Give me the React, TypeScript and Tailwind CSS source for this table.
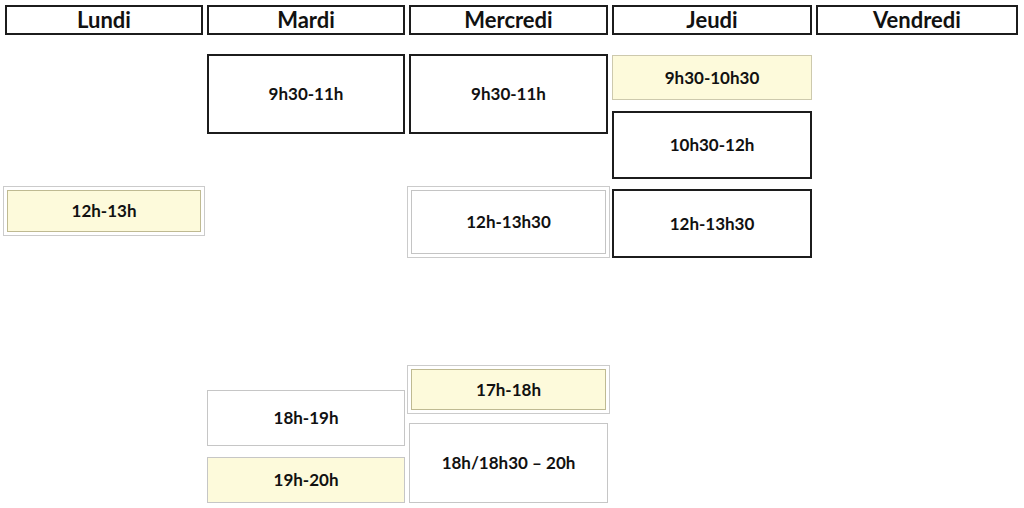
const days = ["Lundi", "Mardi", "Mercredi", "Jeudi", "Vendredi"];

const Plain = ({ label, className }: { label: string; className: string }) => (
  <div
    className={`flex items-center justify-center text-[17px] font-bold text-[#111] ${className}`}
  >
    {label}
  </div>
);

// outer frame with an inner box, like the copied/pasted cells
const Framed = ({
  label,
  className,
  inner,
}: {
  label: string;
  className: string;
  inner: string;
}) => (
  <div
    className={`-mx-[2px] p-[3px] border border-[#cbcbcb] bg-white ${className}`}
  >
    <div
      className={`h-full flex items-center justify-center text-[17px] font-bold text-[#111] border ${inner}`}
    >
      {label}
    </div>
  </div>
);

export default function App() {
  return (
    <div
      className="w-[1024px] h-[508px] bg-white overflow-hidden pt-[5px] pl-[5px]"
      style={{ fontFamily: "Lato, 'Open Sans', sans-serif" }}
    >
      <div className="grid grid-cols-[198px_198px_199px_200px_202px] gap-x-[4px]">
        {days.map((d) => (
          <div
            key={d}
            className="h-[30px] border-2 border-[#1c1c1c] flex items-center justify-center text-[22px] font-bold text-[#111] leading-none"
          >
            {d}
          </div>
        ))}

        {/* Lundi */}
        <div className="flex flex-col">
          <Framed
            label="12h-13h"
            className="mt-[151px] h-[50px]"
            inner="bg-[#fdfadb] border-[#bfba92]"
          />
        </div>

        {/* Mardi */}
        <div className="flex flex-col">
          <Plain
            label="9h30-11h"
            className="mt-[19px] h-[80px] border-2 border-[#1c1c1c]"
          />
          <Plain
            label="18h-19h"
            className="mt-[256px] h-[56px] border border-[#c6c6c6]"
          />
          <Plain
            label="19h-20h"
            className="mt-[11px] h-[46px] border border-[#c6c6c6] bg-[#fdfadb]"
          />
        </div>

        {/* Mercredi */}
        <div className="flex flex-col">
          <Plain
            label="9h30-11h"
            className="mt-[19px] h-[80px] border-2 border-[#1c1c1c]"
          />
          <Framed
            label="12h-13h30"
            className="mt-[52px] h-[72px]"
            inner="bg-white border-[#c4c4c4]"
          />
          <Framed
            label="17h-18h"
            className="mt-[107px] h-[49px]"
            inner="bg-[#fdfadb] border-[#bfba92]"
          />
          <Plain
            label="18h/18h30 – 20h"
            className="mt-[9px] h-[80px] border border-[#c6c6c6]"
          />
        </div>

        {/* Jeudi */}
        <div className="flex flex-col">
          <Plain
            label="9h30-10h30"
            className="mt-[20px] h-[45px] border border-[#cdc9ad] bg-[#fdfadb]"
          />
          <Plain
            label="10h30-12h"
            className="mt-[11px] h-[68px] border-2 border-[#1c1c1c]"
          />
          <Plain
            label="12h-13h30"
            className="mt-[10px] h-[69px] border-2 border-[#1c1c1c]"
          />
        </div>

        {/* Vendredi */}
        <div />
      </div>
    </div>
  );
}
